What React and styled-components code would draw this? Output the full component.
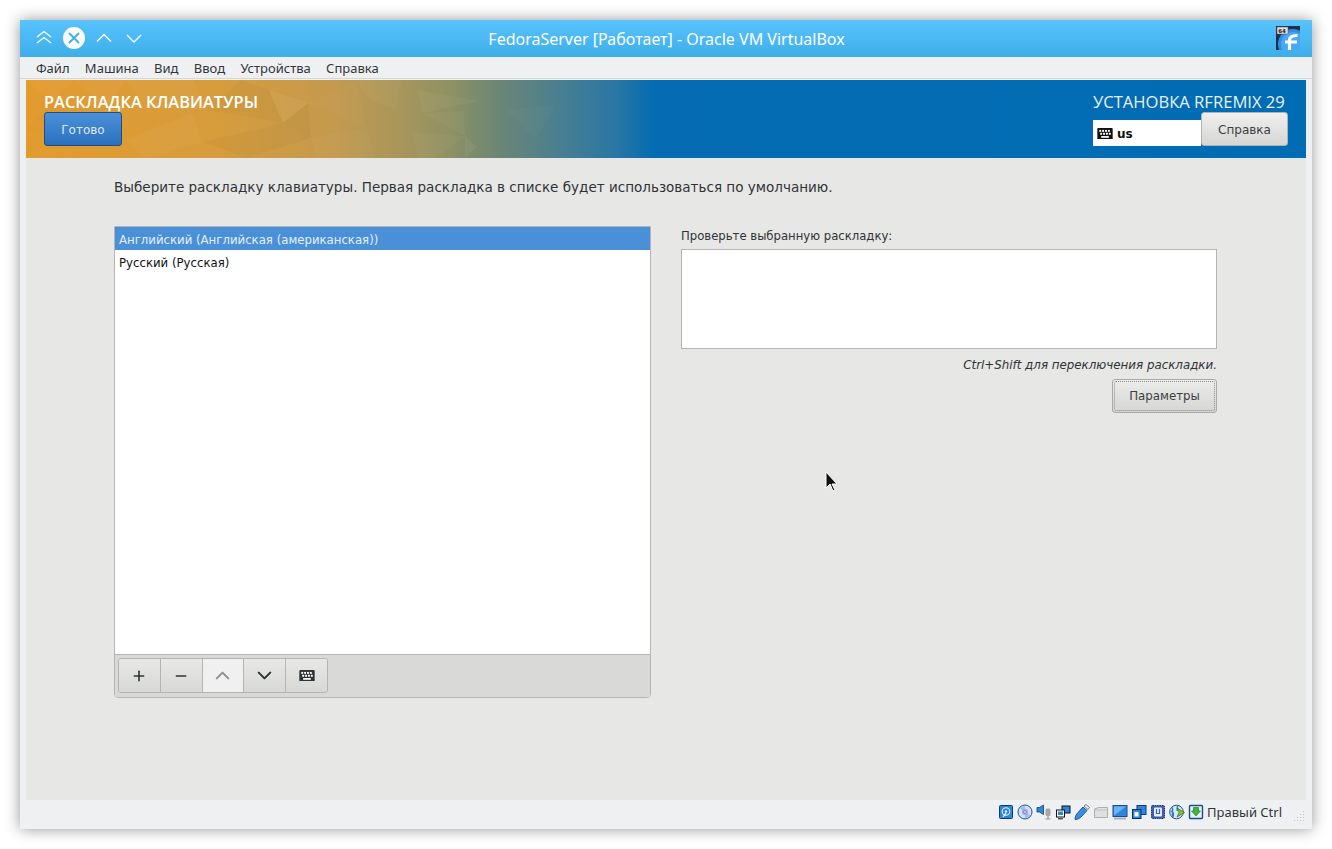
import React from 'react';
import styled, { createGlobalStyle } from 'styled-components';
import { Plus, Minus, ChevronUp, ChevronDown } from 'lucide-react';

const GlobalStyle = createGlobalStyle`
html, body { margin: 0; padding: 0; background: #fff; }
body { width: 1332px; height: 849px; overflow: hidden; font-family: "Noto Sans", sans-serif; }
`;

const Page = styled.div`
padding: 20px;
width: 1332px;
height: 849px;
box-sizing: border-box;
`;

const Window = styled.div`
width: 1292px;
height: 809px;
display: flex;
flex-direction: column;
background: #eff0f1;
box-shadow: 0 0 14px rgba(0, 0, 0, 0.42);
`;

const TitleBar = styled.div`
height: 37px;
flex: none;
box-sizing: border-box;
display: grid;
grid-template-columns: 1fr auto 1fr;
align-items: center;
padding: 0 12px 1px 13px;
background: linear-gradient(#59c3fd, #3daee9);
`;

const TitleButtons = styled.div`
display: flex;
align-items: center;
gap: 8px;
`;

const TitleIcon = styled.svg`
width: 22px;
height: 22px;
display: block;
fill: none;
stroke: ${props => (props.$active ? '#3daee9' : '#fff')};
stroke-width: ${props => (props.$active ? 1.8 : 1.3)};
border-radius: 50%;
background: ${props => (props.$active ? '#fcfcfc' : 'transparent')};
`;

const TitleText = styled.div`
color: #fff;
font-size: 16px;
white-space: nowrap;
padding-top: 2px;
`;

const AppIcon = styled.svg`
width: 24px;
height: 24px;
display: block;
justify-self: end;
`;

const MenuBar = styled.div`
height: 22px;
flex: none;
display: flex;
align-items: center;
gap: 15.3px;
padding: 0 16px;
font-size: 13px;
color: #31363b;
box-sizing: border-box;
border-bottom: 1px solid #d5d6d7;
`;

const Guest = styled.div`
height: 720px;
flex: none;
margin: 1px 6px 0;
background: #e7e7e5;
display: flex;
flex-direction: column;
`;

const Banner = styled.div`
height: 78px;
flex: none;
position: relative;
overflow: hidden;
background: linear-gradient(90deg, #e39b2e 0%, #d69c3c 15%, #c49a4e 24%, #a9965a 29%, #8f9163 33%, #6b8674 37%, #477e93 42%, #2a77a3 46%, #056cb3 49%, #006cb4 100%);
display: flex;
justify-content: space-between;
padding: 13px 18px 0;
box-sizing: border-box;
`;

const BannerArt = styled.svg`
position: absolute;
left: 0;
top: 0;
width: 640px;
height: 78px;
`;

const BannerLeft = styled.div`
position: relative;
display: flex;
flex-direction: column;
align-items: flex-start;
`;

const BannerRight = styled.div`
position: relative;
display: flex;
flex-direction: column;
align-items: flex-start;
`;

const SpokeTitle = styled.div`
font-family: "Open Sans", sans-serif;
font-weight: 600;
font-size: 16.4px;
line-height: 17px;
padding-bottom: 2px;
color: #fff;
white-space: nowrap;
`;

const DoneButton = styled.div`
width: 78px;
height: 34px;
box-sizing: border-box;
padding-top: 1px;
border: 1px solid #1b4f8c;
border-radius: 3px;
background: linear-gradient(#4a90d9, #2a70bd);
color: #dfe9f4;
font-family: "DejaVu Sans", sans-serif;
font-size: 12px;
display: flex;
align-items: center;
justify-content: center;
`;

const ProductTitle = styled.div`
font-family: "Open Sans", sans-serif;
font-size: 16.6px;
line-height: 17px;
padding-bottom: 2px;
color: #e8f1f8;
white-space: nowrap;
`;

const LayoutRow = styled.div`
display: flex;
align-items: flex-start;
`;

const LayoutIndicator = styled.div`
width: 108px;
height: 26px;
margin-top: 8px;
background: #fff;
display: flex;
align-items: center;
gap: 4px;
padding: 1px 0 0 4px;
box-sizing: border-box;
font-family: "DejaVu Sans", sans-serif;
font-weight: 700;
font-size: 12px;
color: #111;
`;

const HelpButton = styled.div`
width: 87px;
height: 34px;
box-sizing: border-box;
padding-top: 1px;
border: 1px solid #b3b3b1;
border-radius: 3px;
background: linear-gradient(#efefed, #d6d6d4);
color: #3a3f44;
font-family: "DejaVu Sans", sans-serif;
font-size: 12px;
display: flex;
align-items: center;
justify-content: center;
`;

const Content = styled.div`
flex: 1;
padding: 20px 88px 0;
position: relative;
font-family: "DejaVu Sans", sans-serif;
`;

const Lead = styled.div`
font-size: 13.54px;
line-height: 18px;
color: #2e3436;
white-space: nowrap;
`;

const Columns = styled.div`
display: flex;
gap: 30px;
margin-top: 30px;
`;

const ListPanel = styled.div`
width: 537px;
height: 472px;
box-sizing: border-box;
border: 1px solid #b4b4b2;
border-radius: 0 0 4px 4px;
background: #fff;
display: flex;
flex-direction: column;
`;

const ListItems = styled.div`
flex: 1;
`;

const ListItem = styled.div`
height: ${props => (props.$selected ? '23px' : '24px')};
box-sizing: border-box;
padding: ${props => (props.$selected ? '2px' : '1px')} 0 0 4px;
display: flex;
align-items: center;
font-size: 11.73px;
color: ${props => (props.$selected ? '#e6eff9' : '#111')};
background: ${props => (props.$selected ? '#4a90d9' : 'transparent')};
`;

const ListToolbar = styled.div`
height: 43px;
flex: none;
box-sizing: border-box;
padding: 3px;
background: #d9d9d7;
border-top: 1px solid #b4b4b2;
border-radius: 0 0 3px 3px;
`;

const ToolGroup = styled.div`
display: flex;
width: 210px;
height: 35px;
box-sizing: border-box;
border: 1px solid #b4b4b2;
border-radius: 3px;
overflow: hidden;
`;

const ToolButton = styled.div`
flex: 1;
display: flex;
align-items: center;
justify-content: center;
box-sizing: border-box;
border-left: ${props => (props.$first ? '0' : '1px solid #b4b4b2')};
background: ${props => (props.$disabled ? '#f0f0f0' : 'linear-gradient(#e8e8e6, #d8d8d6)')};
color: ${props => (props.$disabled ? '#8e9192' : '#2e3436')};
`;

const TestPanel = styled.div`
width: 536px;
display: flex;
flex-direction: column;
align-items: flex-end;
`;

const TestLabel = styled.div`
align-self: flex-start;
font-size: 11.67px;
line-height: 17px;
color: #2e3436;
margin-top: 2px;
`;

const TestArea = styled.div`
width: 100%;
height: 100px;
box-sizing: border-box;
margin-top: 4px;
background: #fff;
border: 1px solid #b4b4b2;
`;

const Hint = styled.div`
font-size: 11.85px;
font-style: italic;
line-height: 16px;
color: #2e3436;
margin-top: 8px;
`;

const OptionsButton = styled.div`
width: 105px;
height: 34px;
box-sizing: border-box;
margin-top: 6px;
border: 1px solid #a9a9a7;
border-radius: 3px;
background: linear-gradient(#ececea, #d5d5d3);
color: #3a3f44;
font-size: 11.8px;
display: flex;
align-items: center;
justify-content: center;
position: relative;
&::after {
  content: "";
  position: absolute;
  inset: 1px;
  border: 1px dotted #8c8c8a;
  border-radius: 2px;
}
`;

const Pointer = styled.svg`
position: absolute;
left: 799px;
top: 313px;
width: 14px;
height: 22px;
`;

const StatusBar = styled.div`
flex: 1;
display: flex;
align-items: center;
justify-content: flex-end;
gap: 3px;
padding: 0 30px 6px 0;
font-size: 13px;
color: #31363b;
position: relative;
`;

const StatusIcon = styled.svg`
width: 16px;
height: 16px;
display: block;
`;

const Grip = styled.svg`
position: absolute;
right: 7px;
bottom: 8px;
width: 12px;
height: 12px;
`;

const KeyboardGlyph = ({ size = 16, color = '#111' }) => (
    <svg width={size} height={size * 0.72} viewBox="0 0 16 12">
        <rect x="0" y="0" width="16" height="12" rx="1" fill={color} />
        {[2, 5, 8, 11].map(x => <rect key={x} x={x} y="2" width="2" height="2" fill="#fff" />)}
        {[3, 6, 9, 12].map(x => <rect key={x} x={x} y="5" width="2" height="2" fill="#fff" />)}
        <rect x="4" y="8.4" width="8" height="1.8" fill="#fff" />
    </svg>
);

const shards = [
    ['0,0 48,0 25,22', '#fff', 0.035], ['48,0 100,0 80,28', '#fff', 0.04], ['25,22 80,28 40,60 0,50', '#000', 0.012],
    ['100,0 168,0 180,30 120,28', '#fff', 0.03], ['166,33 177,62 120,78 100,60', '#fff', 0.035], ['177,62 257,43 285,58 220,78', '#000', 0.025],
    ['243,10 282,23 257,43', '#fff', 0.05], ['282,23 257,43 285,58', '#000', 0.03], ['285,58 340,48 350,78 290,78', '#fff', 0.025],
    ['330,0 375,0 370,30 345,20', '#fff', 0.035], ['282,23 330,0 340,48', '#fff', 0.02], ['215,0 243,10 257,43 180,30', '#000', 0.02],
    ['391,10 453,21 397,33', '#fff', 0.04], ['397,33 438,31 439,56', '#fff', 0.035], ['386,52 439,56 410,78 392,78', '#fff', 0.03],
    ['439,56 451,67 439,78', '#fff', 0.05], ['480,30 530,25 510,60', '#fff', 0.02],
];

function DiskIcon() {
    return <StatusIcon viewBox="0 0 16 16"><rect x="1.5" y="1.5" width="13" height="13" rx="1" fill="#2d86dc" stroke="#0c3b78" /><circle cx="8" cy="7.5" r="3.8" fill="#2d86dc" stroke="#e6f2fd" strokeWidth="1.1" /><circle cx="8" cy="7.5" r="1.2" fill="#e6f2fd" /><path d="M5 13l3-4" stroke="#fff" strokeWidth="1.2" /></StatusIcon>;
}
function CdIcon() {
    return <StatusIcon viewBox="0 0 16 16"><circle cx="8" cy="8" r="7" fill="#cfe2f5" stroke="#24578f" /><path d="M8 8L3 4.5A6 6 0 0 1 8 2zM8 8l5 3.5A6 6 0 0 1 8 14z" fill="#8fc4ef" /><circle cx="8" cy="8" r="3" fill="#b79ae0" /><circle cx="8" cy="8" r="1.3" fill="#fff" stroke="#24578f" strokeWidth=".5" /></StatusIcon>;
}
function AudioIcon() {
    return <StatusIcon viewBox="0 0 16 16"><path d="M1 3.5h2.5L7.5 1v9.5L3.5 8H1z" fill="#2d86dc" stroke="#0c3b78" strokeWidth=".8" /><rect x="9.5" y="4.5" width="5" height="7.5" rx="1.5" fill="#a6a6a6" /><path d="M12 12v2.500M9.5 15h5" stroke="#999" strokeWidth="1.2" /></StatusIcon>;
}
function NetIcon() {
    return <StatusIcon viewBox="0 0 16 16"><rect x="7" y="2" width="8" height="7" fill="#2d86dc" stroke="#111" /><rect x="1.5" y="6" width="8" height="7" fill="#fff" stroke="#111" /><rect x="3" y="7.5" width="5" height="3.5" fill="#2d86dc" /><path d="M3 14.8h5" stroke="#111" /></StatusIcon>;
}
function UsbIcon() {
    return <StatusIcon viewBox="0 0 16 16"><path d="M1 15.5c0-3 1-5 3-7l5-5.500 4 3.500-5 5.500c-2 2-4 3.500-7 3.500z" fill="#3a8fe0" stroke="#12508f" strokeWidth=".9" /><path d="M10 2l2-1.500 3.500 3-1.500 2z" fill="#eee" stroke="#555" strokeWidth=".7" /></StatusIcon>;
}
function FolderIcon() {
    return <StatusIcon viewBox="0 0 16 16"><path d="M1.5 5l4-1.500h9v10h-13z" fill="#e0e0e0" stroke="#aeaeae" /><path d="M2 6h12" stroke="#c0c0c0" /></StatusIcon>;
}
function ScreenIcon() {
    return <StatusIcon viewBox="0 0 16 16"><rect x="1" y="1.5" width="14" height="11" fill="#2f86e0" stroke="#1a4f8c" /><path d="M2 11.5L14 2.500H2z" fill="#6db4f2" /><path d="M2 14.5h12" stroke="#a8b0b8" strokeWidth="2" /></StatusIcon>;
}
function CaptureIcon() {
    return <StatusIcon viewBox="0 0 16 16"><rect x="6" y="1.5" width="9" height="9" fill="#2d86dc" stroke="#0c3b78" /><rect x="1.5" y="5.5" width="8.5" height="9" fill="#2d86dc" stroke="#0c2f60" /><rect x="3.5" y="8" width="4" height="4.5" fill="#fff" /></StatusIcon>;
}
function ChipIcon() {
    return <StatusIcon viewBox="0 0 16 16"><rect x="1.5" y="1.5" width="13" height="13" rx="1" fill="#3a5fb0" stroke="#1d336f" strokeDasharray="1.5 .8" /><rect x="4" y="3.5" width="8" height="9" rx="1" fill="#e6eef9" /><path d="M6.5 5v4.500h3V5" fill="none" stroke="#3a5fb0" strokeWidth="1.2" /></StatusIcon>;
}
function GlobeIcon() {
    return <StatusIcon viewBox="0 0 16 16"><circle cx="7.5" cy="8" r="6.8" fill="#d8e8f6" stroke="#1d4f8c" /><path d="M3 3c2 3-1 6 1 10M2 7c3 1 3 3 2 6M9 1.500C7 4 9 5 8 7" fill="none" stroke="#2d74c0" strokeWidth="1.3" /><path d="M8 4l7.500 4.500L8 13l2-4.500z" fill="#7cc62c" stroke="#2f6d12" strokeWidth=".7" /></StatusIcon>;
}
function ArrowIcon() {
    return <StatusIcon viewBox="0 0 16 16"><rect x="1.5" y="1.5" width="13" height="13" rx="1" fill="#e8f0fa" stroke="#12508f" strokeWidth="1.4" /><path d="M5.5 3.500h5V7h2L8 12 3.500 7h2z" fill="#3fb53a" stroke="#1c6f18" strokeWidth=".6" /></StatusIcon>;
}

function App() {
    return <Page>
        <GlobalStyle />
        <Window>
            <TitleBar>
                <TitleButtons>
                    <TitleIcon viewBox="0 0 22 22"><path d="M4 10l7-5.500 7 5.500M4 16l7-5.500 7 5.500" /></TitleIcon>
                    <TitleIcon viewBox="0 0 22 22" $active><path d="M6 6l10 10M16 6L6 16" /></TitleIcon>
                    <TitleIcon viewBox="0 0 22 22"><path d="M4 14.500l7-7 7 7" /></TitleIcon>
                    <TitleIcon viewBox="0 0 22 22"><path d="M4 8l7 7 7-7" /></TitleIcon>
                </TitleButtons>
                <TitleText>FedoraServer [Работает] - Oracle VM VirtualBox</TitleText>
                <AppIcon viewBox="0 0 24 24">
                    <rect width="24" height="24" fill="#1f2f4c" />
                    <circle cx="17" cy="18" r="15" fill="#2f8fe6" />
                    <circle cx="17" cy="18" r="12" fill="#4aa8f2" />
                    <path d="M13.500 24v-10c0-3 2-4.500 8-4.500M9 16h12" fill="none" stroke="#fff" strokeWidth="3.200" />
                    <rect x="1" y="1" width="11" height="7" fill="#dedede" stroke="#555" strokeWidth=".5" />
                    <text x="2.200" y="6.500" fontFamily="DejaVu Sans, sans-serif" fontWeight="700" fontSize="5.500" fill="#222">64</text>
                </AppIcon>
            </TitleBar>
            <MenuBar>
                <span>Файл</span>
                <span>Машина</span>
                <span>Вид</span>
                <span>Ввод</span>
                <span>Устройства</span>
                <span>Справка</span>
            </MenuBar>
            <Guest>
                <Banner>
                    <BannerArt viewBox="0 0 640 78">
                        {shards.map(([points, fill, opacity]) => <polygon key={points} points={points} fill={fill} opacity={opacity} />)}
                    </BannerArt>
                    <BannerLeft>
                        <SpokeTitle>РАСКЛАДКА КЛАВИАТУРЫ</SpokeTitle>
                        <DoneButton>Готово</DoneButton>
                    </BannerLeft>
                    <BannerRight>
                        <ProductTitle>УСТАНОВКА RFREMIX 29</ProductTitle>
                        <LayoutRow>
                            <LayoutIndicator><KeyboardGlyph />us</LayoutIndicator>
                            <HelpButton>Справка</HelpButton>
                        </LayoutRow>
                    </BannerRight>
                </Banner>
                <Content>
                    <Lead>Выберите раскладку клавиатуры. Первая раскладка в списке будет использоваться по умолчанию.</Lead>
                    <Columns>
                        <ListPanel>
                            <ListItems>
                                <ListItem $selected>Английский (Английская (американская))</ListItem>
                                <ListItem>Русский (Русская)</ListItem>
                            </ListItems>
                            <ListToolbar>
                                <ToolGroup>
                                    <ToolButton $first><Plus size={16} strokeWidth={2.4} /></ToolButton>
                                    <ToolButton><Minus size={16} strokeWidth={2.4} /></ToolButton>
                                    <ToolButton $disabled><ChevronUp size={23} strokeWidth={2.2} /></ToolButton>
                                    <ToolButton><ChevronDown size={23} strokeWidth={2.2} /></ToolButton>
                                    <ToolButton><KeyboardGlyph color="#2e3436" /></ToolButton>
                                </ToolGroup>
                            </ListToolbar>
                        </ListPanel>
                        <TestPanel>
                            <TestLabel>Проверьте выбранную раскладку:</TestLabel>
                            <TestArea />
                            <Hint>Ctrl+Shift для переключения раскладки.</Hint>
                            <OptionsButton>Параметры</OptionsButton>
                        </TestPanel>
                    </Columns>
                    <Pointer viewBox="0 0 14 22">
                        <path d="M1 1v16l4-4 3 7 2-1-3-6h5z" fill="#111" stroke="#fff" strokeWidth="1" />
                    </Pointer>
                </Content>
            </Guest>
            <StatusBar>
                <DiskIcon />
                <CdIcon />
                <AudioIcon />
                <NetIcon />
                <UsbIcon />
                <FolderIcon />
                <ScreenIcon />
                <CaptureIcon />
                <ChipIcon />
                <GlobeIcon />
                <ArrowIcon />
                <span>Правый Ctrl</span>
                <Grip viewBox="0 0 12 12">
                    {[[10, 2], [7, 5], [10, 5], [4, 8], [7, 8], [10, 8], [1, 11], [4, 11], [7, 11], [10, 11]].map(([x, y]) => <rect key={`${x}-${y}`} x={x} y={y} width="1" height="1" fill="#c4c5c6" />)}
                </Grip>
            </StatusBar>
        </Window>
    </Page>;
}

export default App;
